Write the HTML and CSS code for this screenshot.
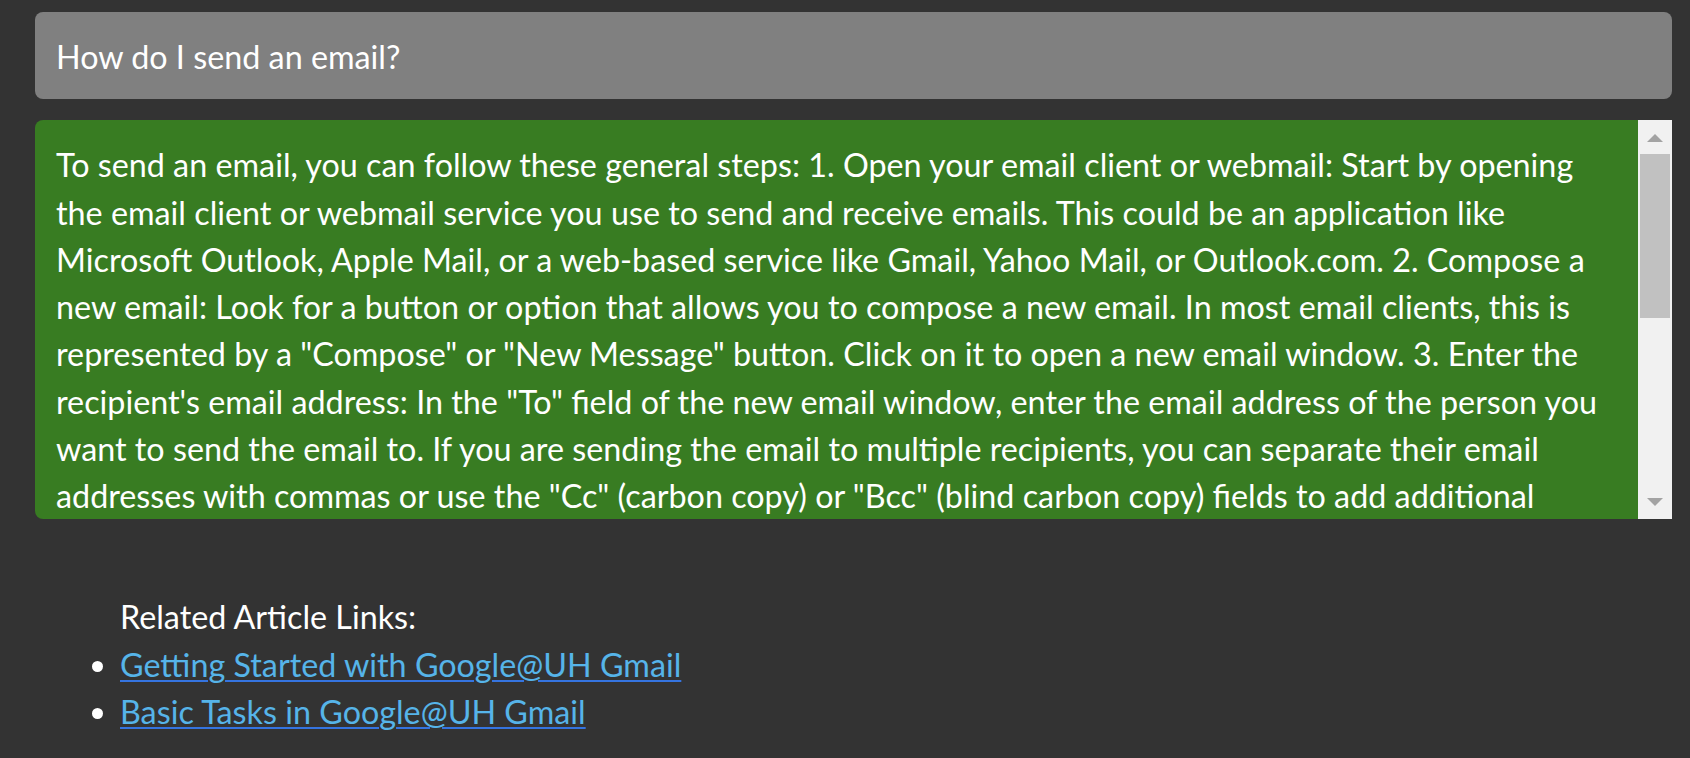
FILE: index.html
```html
<!DOCTYPE html>
<html lang="en">
<head>
<meta charset="utf-8">
<title>Ask a question</title>
<link rel="stylesheet" href="styles.css">
</head>
<body>
<main class="chat">
  <div class="question">How do I send an email?</div>
  <div class="answer">
    <div class="answer-text">To send an email, you can follow these general steps: 1. Open your email client or webmail: Start by opening the email client or webmail service you use to send and receive emails. This could be an application like Microsoft Outlook, Apple Mail, or a web-based service like Gmail, Yahoo Mail, or Outlook.com. 2. Compose a new email: Look for a button or option that allows you to compose a new email. In most email clients, this is represented by a "Compose" or "New Message" button. Click on it to open a new email window. 3. Enter the recipient's email address: In the "To" field of the new email window, enter the email address of the person you want to send the email to. If you are sending the email to multiple recipients, you can separate their email addresses with commas or use the "Cc" (carbon copy) or "Bcc" (blind carbon copy) fields to add additional recipients. 4. Add a subject: Enter a brief subject line that summarizes the content of your email. 5. Write your message: Type the body of your email in the main text area. 6. Send the email: When you are ready, click the "Send" button.</div>
    <div class="scrollbar" aria-hidden="true">
      <div class="sb-btn"><span class="arrow-up"></span></div>
      <div class="sb-track"><div class="sb-thumb"></div></div>
      <div class="sb-btn"><span class="arrow-down"></span></div>
    </div>
  </div>
  <section class="related">
    <p class="related-title">Related Article Links:</p>
    <ul class="related-list">
      <li><a href="#">Getting Started with Google@UH Gmail</a></li>
      <li><a href="#">Basic Tasks in Google@UH Gmail</a></li>
    </ul>
  </section>
</main>
</body>
</html>
```
FILE: styles.css
```css
html, body {
  margin: 0;
  background: #333333;
}

body {
  font-family: "Lato", "Open Sans", sans-serif;
  font-size: 32.3px;
  line-height: 47.3px;
  color: #ffffff;
}

.chat {
  width: 1637px;
  padding: 12px 0 0 35px;
}

.question {
  background: #808080;
  border-radius: 8px;
  padding: 21px 21px 19px 21px;
}

.answer {
  margin-top: 21px;
  height: 399px;
  display: flex;
  background: #387c22;
  border-radius: 8px 0 0 8px;
  overflow: hidden;
}

.answer-text {
  flex: 1;
  padding: 21px 20px 0 21px;
  overflow: hidden;
}

.scrollbar {
  width: 34px;
  flex: none;
  display: flex;
  flex-direction: column;
  background: #f1f1f1;
}

.sb-btn {
  height: 34px;
  flex: none;
  display: flex;
  align-items: center;
  justify-content: center;
}

.arrow-up {
  width: 0;
  height: 0;
  border-left: 8px solid transparent;
  border-right: 8px solid transparent;
  border-bottom: 8px solid #a3a3a3;
  margin-top: 2px;
}

.arrow-down {
  width: 0;
  height: 0;
  border-left: 8px solid transparent;
  border-right: 8px solid transparent;
  border-top: 8px solid #a3a3a3;
}

.sb-track {
  flex: 1;
}

.sb-thumb {
  height: 164px;
  margin: 0 2px;
  background: #c1c1c1;
}

.related {
  margin-top: 74px;
  padding-left: 45px;
}

.related-title {
  margin: 0;
  padding-left: 40px;
}

.related-list {
  margin: 0;
  padding-left: 40px;
}

.related-list a {
  color: #56b4e9;
  text-decoration: underline;
  text-decoration-color: #3574e0;
  text-decoration-thickness: 2px;
  text-underline-offset: 3px;
}
```
